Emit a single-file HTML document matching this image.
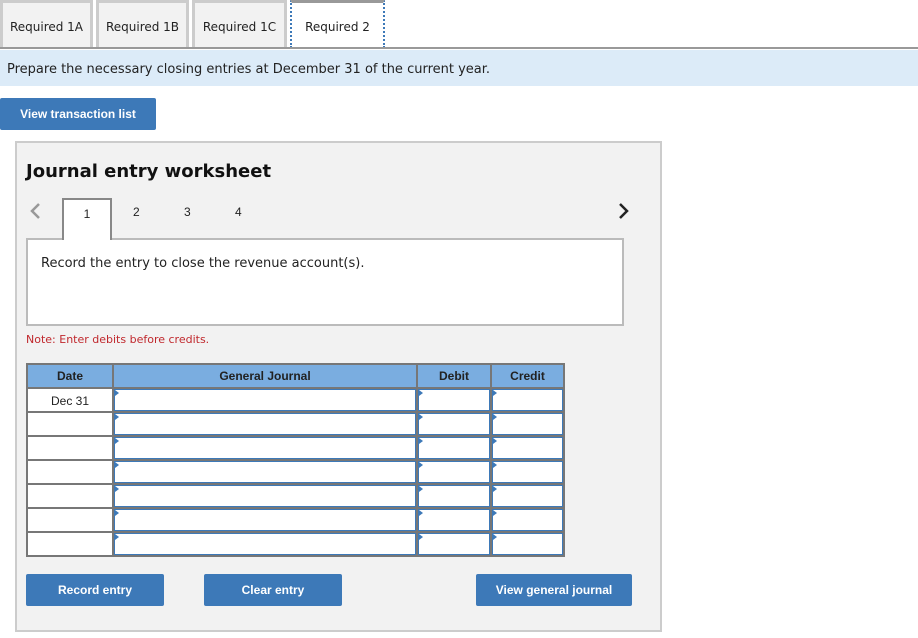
<!DOCTYPE html>
<html><head><meta charset="utf-8"><style>
*{box-sizing:border-box;margin:0;padding:0}
body{width:918px;height:638px;background:#fff;font-family:Verdana,"DejaVu Sans",sans-serif;position:relative;overflow:hidden;font-size:12px;color:#222}
.a{position:absolute}
.tab{position:absolute;top:0;height:48px;background:#f2f2f2;border:3px solid #ccc;border-bottom:none;font-size:12px;line-height:48px;text-align:center}
.btn{position:absolute;background:#3d79b8;color:#fff;font-family:"Liberation Sans",Arial,sans-serif;font-weight:bold;font-size:12px;text-align:center;border-radius:2px}
.grid{position:absolute;left:26px;top:363px;width:539px;height:194px;background:#777;padding:2px;display:grid;grid-template-columns:84px 302px 72px 71px;grid-template-rows:repeat(8,22px);gap:2px}
.grid div{background:#fff;font-family:"Liberation Sans",Arial,sans-serif;font-size:12px;text-align:center;line-height:24px;position:relative}
.grid .h{background:#7aade0;font-weight:bold;color:#222;line-height:22px}
.grid .i::after{content:"";position:absolute;left:0;top:0;right:0;bottom:0;border:1px solid #3d79b8}
.grid .i::before{content:"";position:absolute;left:1px;top:1px;border-left:4px solid #3d79b8;border-top:3px solid transparent;border-bottom:3px solid transparent}
</style></head><body>
<div class="tab" style="left:0;width:93px">Required 1A</div>
<div class="tab" style="left:96px;width:93px">Required 1B</div>
<div class="tab" style="left:192px;width:95px">Required 1C</div>
<div class="tab" style="left:290px;width:95px;background:#fff;border:2px dotted #3d79b8;border-top:3px solid #999;border-bottom:none">Required 2</div>
<div class="a" style="left:0;top:47px;width:918px;height:2px;background:#999"></div>
<div class="a" style="left:0;top:50px;width:918px;height:36px;background:#dcebf8;font-size:13px;line-height:40px;padding-left:7px">Prepare the necessary closing entries at December 31 of the current year.</div>
<div class="btn" style="left:0;top:98px;width:156px;height:32px;line-height:32px">View transaction list</div>
<div class="a" style="left:15px;top:141px;width:647px;height:491px;background:#f2f2f2;border:2px solid #ccc"></div>
<div class="a" style="left:26px;top:161px;font-size:18px;font-weight:bold;color:#111">Journal entry worksheet</div>
<svg class="a" style="left:28px;top:202px" width="14" height="18"><path d="M11 2 L4 9 L11 16" fill="none" stroke="#999" stroke-width="2.5"/></svg>
<svg class="a" style="left:617px;top:202px" width="14" height="18"><path d="M3 2 L10 9 L3 16" fill="none" stroke="#222" stroke-width="2.5"/></svg>
<div class="a" style="left:62px;top:198px;width:50px;height:42px;background:#fff;border:2px solid #888;border-bottom:none;text-align:center;line-height:28px;font-family:'Liberation Sans',sans-serif">1</div>
<div class="a" style="left:133px;top:205px;font-family:'Liberation Sans',sans-serif">2</div>
<div class="a" style="left:184px;top:205px;font-family:'Liberation Sans',sans-serif">3</div>
<div class="a" style="left:235px;top:205px;font-family:'Liberation Sans',sans-serif">4</div>
<div class="a" style="left:26px;top:238px;width:598px;height:88px;background:#fff;border:2px solid #bbb;padding:16px 13px;font-size:13px">Record the entry to close the revenue account(s).</div>
<div class="a" style="left:62px;top:237px;width:50px;height:3px;background:#fff;border-left:2px solid #888;border-right:2px solid #888"></div>
<div class="a" style="left:26px;top:333px;font-size:11px;color:#c0282d">Note: Enter debits before credits.</div>
<div class="grid">
<div class="h">Date</div><div class="h">General Journal</div><div class="h">Debit</div><div class="h">Credit</div>
<div>Dec 31</div><div class="i"></div><div class="i"></div><div class="i"></div>
<div></div><div class="i"></div><div class="i"></div><div class="i"></div>
<div></div><div class="i"></div><div class="i"></div><div class="i"></div>
<div></div><div class="i"></div><div class="i"></div><div class="i"></div>
<div></div><div class="i"></div><div class="i"></div><div class="i"></div>
<div></div><div class="i"></div><div class="i"></div><div class="i"></div>
<div></div><div class="i"></div><div class="i"></div><div class="i"></div>
</div>
<div class="btn" style="left:26px;top:574px;width:138px;height:32px;line-height:32px">Record entry</div>
<div class="btn" style="left:204px;top:574px;width:138px;height:32px;line-height:32px">Clear entry</div>
<div class="btn" style="left:476px;top:574px;width:156px;height:32px;line-height:32px">View general journal</div>
</body></html>
